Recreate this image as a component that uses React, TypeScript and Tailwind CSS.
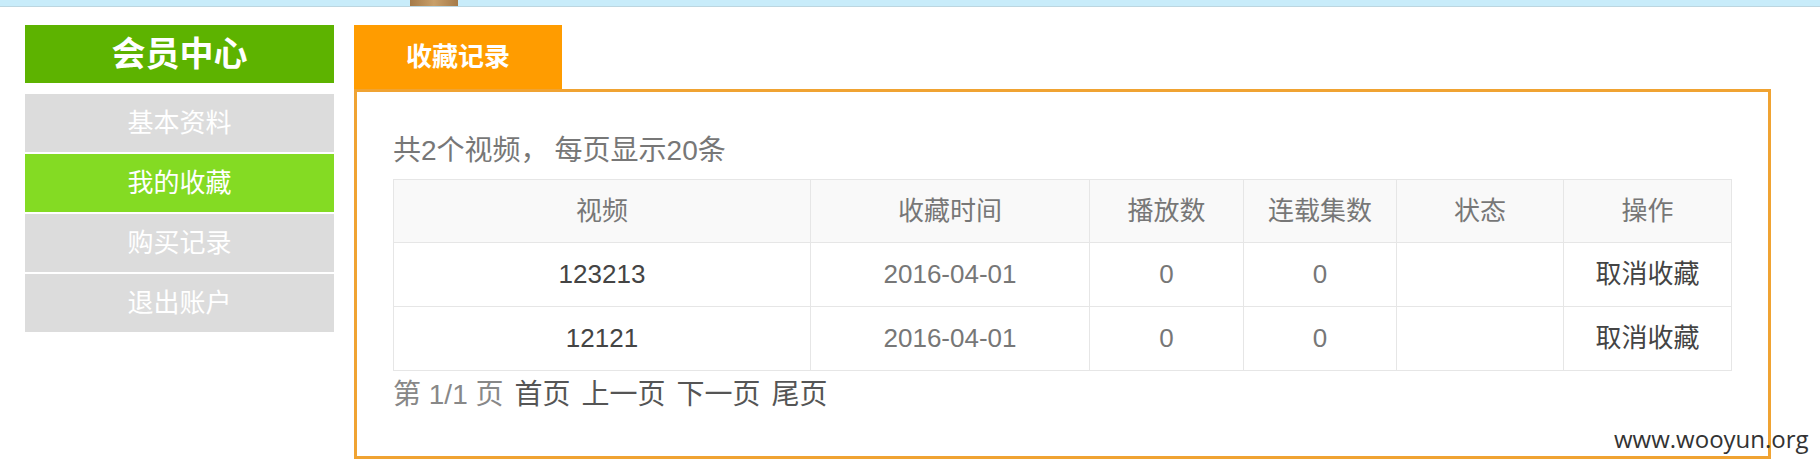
import React from "react";

const FONT = { fontFamily: '"Liberation Sans", "Noto Sans CJK SC", sans-serif' };

const menu = [
  { label: "基本资料", active: false },
  { label: "我的收藏", active: true },
  { label: "购买记录", active: false },
  { label: "退出账户", active: false },
];

const rows = [
  { video: "123213", time: "2016-04-01", plays: "0", eps: "0", status: "" },
  { video: "12121", time: "2016-04-01", plays: "0", eps: "0", status: "" },
];

export default function App() {
  return (
    <div className="relative w-[1820px] h-[474px] bg-white overflow-hidden" style={FONT}>
      {/* top strip */}
      <div className="h-[7px] bg-[#c8ecfa] border-b border-[#bcd6e0] flex">
        <div className="ml-[410px] w-[48px] h-[6px] bg-gradient-to-r from-[#a57a48] via-[#c9a06a] to-[#a57a48]" />
      </div>

      <div className="flex pl-[25px] pt-[18px] gap-[20px]">
        {/* sidebar */}
        <div className="w-[309px] flex flex-col">
          <div className="h-[58px] bg-[#5db300] text-white font-bold text-[34px] flex items-center justify-center leading-none">
            会员中心
          </div>
          <div className="mt-[11px] flex flex-col gap-[2px]">
            {menu.map((m) => (
              <div
                key={m.label}
                className={`h-[58px] flex items-center justify-center text-white text-[26px] leading-none ${
                  m.active ? "bg-[#84db23]" : "bg-[#dcdcdc]"
                }`}
              >
                {m.label}
              </div>
            ))}
          </div>
        </div>

        {/* main */}
        <div className="w-[1417px] flex flex-col">
          <div className="w-[208px] h-[64px] bg-[#ff9c00] text-white font-bold text-[26px] flex items-center justify-center leading-none">
            收藏记录
          </div>
          <div className="border-[3px] border-[#f0a332] px-[36px] pt-[41px] pb-[43px]">
            <div className="text-[28px] leading-[36px] text-[#777] flex">
              <span>共2个视频，</span>
              <span className="ml-[6px]">每页显示20条</span>
            </div>
            <table className="mt-[10px] w-full table-fixed border-collapse text-[26px]">
              <colgroup>
                <col className="w-[417px]" />
                <col className="w-[279px]" />
                <col className="w-[154px]" />
                <col className="w-[153px]" />
                <col className="w-[167px]" />
                <col className="w-[168px]" />
              </colgroup>
              <thead>
                <tr className="bg-[#f9f9f9] h-[63px]">
                  {["视频", "收藏时间", "播放数", "连载集数", "状态", "操作"].map((h) => (
                    <th key={h} className="border border-[#e6e6e6] font-normal text-[#777] text-center">
                      {h}
                    </th>
                  ))}
                </tr>
              </thead>
              <tbody>
                {rows.map((r) => (
                  <tr key={r.video} className="h-[64px]">
                    <td className="border border-[#e6e6e6] text-center text-[#444]">{r.video}</td>
                    <td className="border border-[#e6e6e6] text-center text-[#777]">{r.time}</td>
                    <td className="border border-[#e6e6e6] text-center text-[#777]">{r.plays}</td>
                    <td className="border border-[#e6e6e6] text-center text-[#777]">{r.eps}</td>
                    <td className="border border-[#e6e6e6] text-center text-[#777]">{r.status}</td>
                    <td className="border border-[#e6e6e6] text-center text-[#444]">取消收藏</td>
                  </tr>
                ))}
              </tbody>
            </table>
            <div className="mt-[6px] text-[28px] leading-[36px] flex gap-[11px]">
              <span className="text-[#888]">第 1/1 页</span>
              <span className="text-[#555]">首页</span>
              <span className="text-[#555]">上一页</span>
              <span className="text-[#555]">下一页</span>
              <span className="text-[#555]">尾页</span>
            </div>
          </div>
        </div>
      </div>

      {/* watermark */}
      <div
        className="absolute left-[1614px] top-[427px] text-[24px] leading-none text-[#333]"
        style={{ fontFamily: '"Open Sans", "Liberation Sans", sans-serif' }}
      >
        www.wooyun.org
      </div>
    </div>
  );
}
